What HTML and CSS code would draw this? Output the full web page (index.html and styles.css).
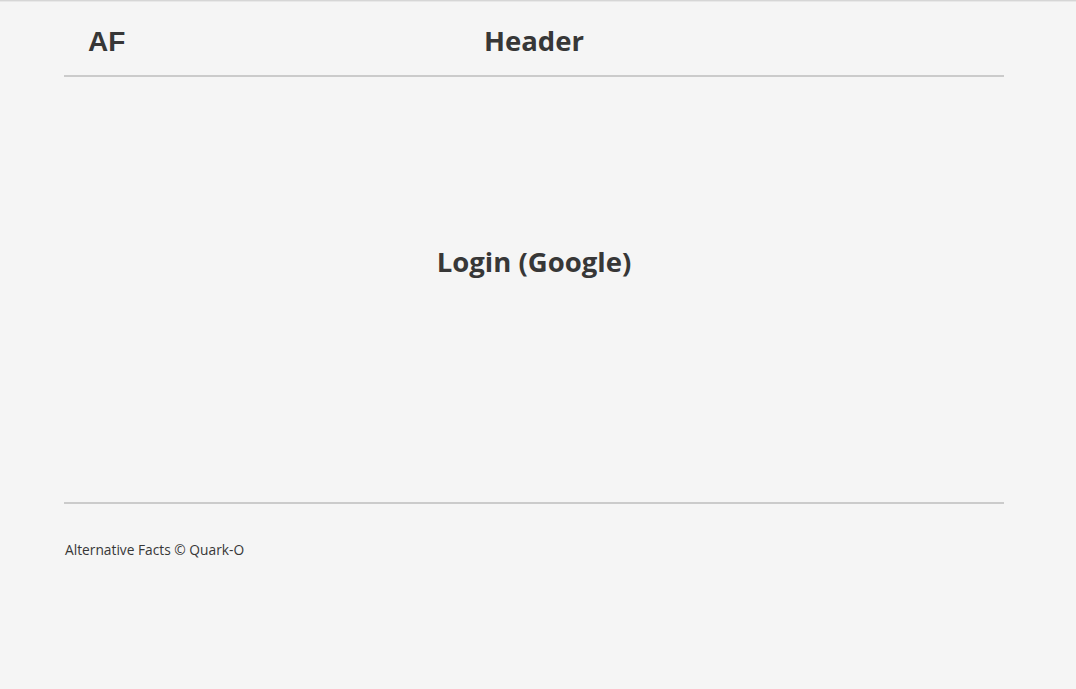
FILE: index.html
```html
<!DOCTYPE html>
<html lang="en">
<head>
<meta charset="utf-8">
<title>Alternative Facts</title>
<link rel="stylesheet" href="styles.css">
</head>
<body>
<div class="topline"></div>
<div class="page">
  <header class="header">
    <div class="logo">AF</div>
    <div class="title">Header</div>
    <div class="spacer"></div>
  </header>
  <main class="main">
    <div class="login">Login (Google)</div>
  </main>
  <footer class="footer">Alternative Facts © Quark-O</footer>
</div>
</body>
</html>
```
FILE: styles.css
```css
html, body {
  margin: 0;
  padding: 0;
  background: #f5f5f5;
  color: #373737;
  font-family: "Open Sans", "Noto Sans", sans-serif;
}
.topline {
  height: 1px;
  background: #d6d6d6;
  border-bottom: 1px solid #e8e8e8;
}
.page {
  width: 940px;
  margin-left: 64px;
}
.header {
  display: grid;
  grid-template-columns: 1fr auto 1fr;
  align-items: center;
  height: 73px;
  border-bottom: 2px solid #cbcbcb;
}
.logo {
  padding-left: 24px;
  font-family: "Liberation Sans", Arial, sans-serif;
  font-weight: bold;
  font-size: 28px;
  line-height: 1;
  padding-top: 7px;
}
.title {
  font-weight: 700;
  font-size: 27.5px;
  line-height: 1;
  padding-top: 4px;
}
.main {
  height: 427px;
  border-bottom: 2px solid #cbcbcb;
  display: flex;
  justify-content: center;
  padding-top: 165px;
  box-sizing: border-box;
}
.login {
  font-weight: 700;
  font-size: 27.5px;
  line-height: 40px;
  height: 40px;
}
.footer {
  padding-top: 37px;
  font-size: 13.75px;
  font-weight: 500;
  line-height: 18px;
  padding-left: 1px;
}
```
